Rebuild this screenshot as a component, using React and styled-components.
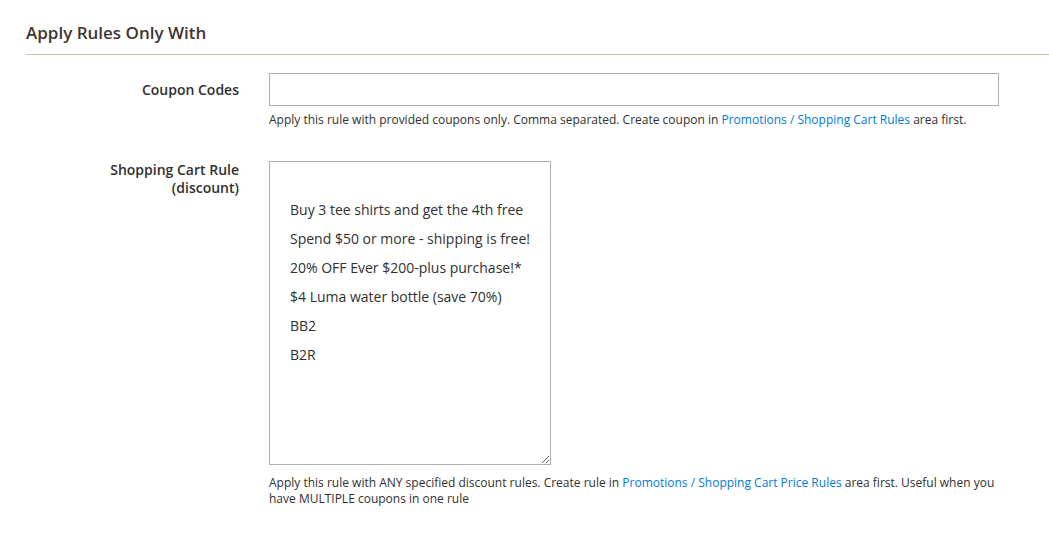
import React from "react";
import styled, { createGlobalStyle } from "styled-components";

const GlobalStyle = createGlobalStyle`
  html, body {
    margin: 0;
    padding: 0;
    background: #ffffff;
  }
  body {
    font-family: "Open Sans", "Noto Sans", sans-serif;
    color: #303030;
  }
`;

const Page = styled.div`
  padding: 23px 0 0 26px;
`;

const Fieldset = styled.section`
  display: flex;
  flex-direction: column;
`;

const Title = styled.h2`
  margin: 0;
  padding-bottom: 11px;
  border-bottom: 1px solid #cac3b4;
  font-size: 17px;
  line-height: 20px;
  font-weight: 600;
  color: #41362f;
`;

const Row = styled.div`
  display: grid;
  grid-template-columns: 213px 730px;
  column-gap: 30px;
  margin-top: ${(p) => p.$top}px;
`;

const Label = styled.label`
  text-align: right;
  font-size: 14px;
  line-height: 18px;
  font-weight: 600;
  color: #303030;
  padding-top: ${(p) => p.$pad}px;
`;

const Control = styled.div`
  display: flex;
  flex-direction: column;
  align-items: flex-start;
`;

const TextInput = styled.input`
  box-sizing: border-box;
  width: 730px;
  height: 33px;
  border: 1px solid #adadad;
  border-radius: 0;
  padding: 0 10px;
  font-family: inherit;
  font-size: 14px;
  color: #303030;
  background: #fff;
  outline: none;
`;

const MultiSelect = styled.div`
  box-sizing: border-box;
  width: 282px;
  height: 304px;
  border: 1px solid #adadad;
  padding: 4px 0;
  overflow: auto;
  resize: both;
  background: #fff;
`;

const Option = styled.div`
  height: 29px;
  line-height: 29px;
  padding: 0 20px;
  font-size: 14px;
  color: #303030;
  white-space: nowrap;
`;

const Note = styled.div`
  margin-top: ${(p) => p.$top}px;
  max-width: 730px;
  font-size: 12px;
  line-height: 16px;
  color: #303030;
`;

const Link = styled.a`
  color: #007bdb;
  text-decoration: none;
`;

const options = [
  "",
  "Buy 3 tee shirts and get the 4th free",
  "Spend $50 or more - shipping is free!",
  "20% OFF Ever $200-plus purchase!*",
  "$4 Luma water bottle (save 70%)",
  "BB2",
  "B2R",
];

export default function App() {
  return (
    <Page>
      <GlobalStyle />
      <Fieldset>
        <Title>Apply Rules Only With</Title>
        <Row $top={18}>
          <Label $pad={8}>Coupon Codes</Label>
          <Control>
            <TextInput type="text" />
            <Note $top={6}>
              Apply this rule with provided coupons only. Comma separated. Create coupon in{" "}
              <Link href="#">Promotions / Shopping Cart Rules</Link> area first.
            </Note>
          </Control>
        </Row>
        <Row $top={33}>
          <Label $pad={0}>
            Shopping Cart Rule
            <br />
            (discount)
          </Label>
          <Control>
            <MultiSelect>
              {options.map((o, i) => (
                <Option key={i}>{o || "\u00a0"}</Option>
              ))}
            </MultiSelect>
            <Note $top={10}>
              Apply this rule with ANY specified discount rules. Create rule in{" "}
              <Link href="#">Promotions / Shopping Cart Price Rules</Link> area first. Useful when you
              have MULTIPLE coupons in one rule
            </Note>
          </Control>
        </Row>
      </Fieldset>
    </Page>
  );
}
